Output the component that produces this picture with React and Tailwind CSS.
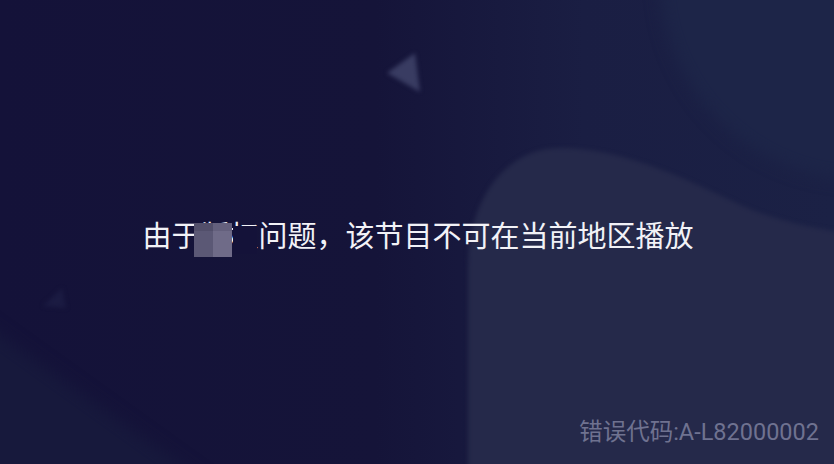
import React from 'react';

// background art of the player: soft shapes on a dark navy field
const Backdrop = () => (
    <svg className="absolute inset-0 w-full h-full" viewBox="0 0 834 464" preserveAspectRatio="none">
        <defs>
            <linearGradient id="base" x1="0" y1="0" x2="1" y2="0">
                <stop offset="0" stopColor="#141239" />
                <stop offset="0.45" stopColor="#151439" />
                <stop offset="0.7" stopColor="#1a1e43" />
                <stop offset="1" stopColor="#1b2145" />
            </linearGradient>
            <filter id="soft" filterUnits="userSpaceOnUse" x="-200" y="-200" width="1234" height="864" colorInterpolationFilters="sRGB">
                <feGaussianBlur stdDeviation="2" />
            </filter>
            <filter id="softer" filterUnits="userSpaceOnUse" x="-200" y="-200" width="1234" height="864" colorInterpolationFilters="sRGB">
                <feGaussianBlur stdDeviation="8" />
            </filter>
        </defs>
        <rect x="0" y="0" width="834" height="464" fill="url(#base)" />
        <circle cx="862" cy="-22" r="202" fill="#1d2548" filter="url(#softer)" />
        <path d="M-60,292 L230,500 L-60,500 Z" fill="#17193c" filter="url(#softer)" />
        <path
            d="M468,520 L468,268 C468,196 508,148 560,148 C620,148 680,176 730,200 C770,220 820,232 880,236 L880,520 Z"
            fill="#25294a"
            filter="url(#soft)"
        />
        <path d="M387,73 L415,53 L420,92 Z" fill="#393c62" filter="url(#soft)" />
        <path d="M43,306 L62,288 L66,308 Z" fill="#1b1b42" filter="url(#soft)" />
    </svg>
);

// pixelated patch hiding part of the message
const Censored = ({ children }) => (
    <span className="relative inline-block">
        {children}
        <span className="absolute left-[33px] top-[6px] w-[24px] h-[28px] bg-[#141239]" />
        <span className="absolute left-[-6px] top-[3px] w-[38px] h-[34px] grid grid-cols-2 grid-rows-[8px_1fr]">
            <span className="bg-[#524f6b]" />
            <span className="bg-[#64607d]" />
            <span className="bg-[#5b5875]" />
            <span className="bg-[#6f6b88]" />
        </span>
    </span>
);

export default function App() {
    return (
        <div className="relative w-full h-[464px] overflow-hidden bg-[#141239]">
            <Backdrop />

            {/* Message */}
            <div className="relative h-full flex items-center justify-center pt-1 pl-[2px]">
                <p
                    className="text-[29px] leading-none text-[#f2f2f7] font-normal whitespace-nowrap"
                    style={{ fontFamily: '"Noto Sans CJK SC", "Noto Sans", sans-serif' }}
                >
                    由于<Censored>版权</Censored>问题，该节目不可在当前地区播放
                </p>
            </div>

            {/* Error code */}
            <div
                className="absolute right-[15px] bottom-[20px] text-[23.5px] leading-none text-[#6f7290] whitespace-nowrap"
                style={{ fontFamily: 'Roboto, "Noto Sans CJK SC", sans-serif' }}
            >
                错误代码:A-L82000002
            </div>
        </div>
    );
}
